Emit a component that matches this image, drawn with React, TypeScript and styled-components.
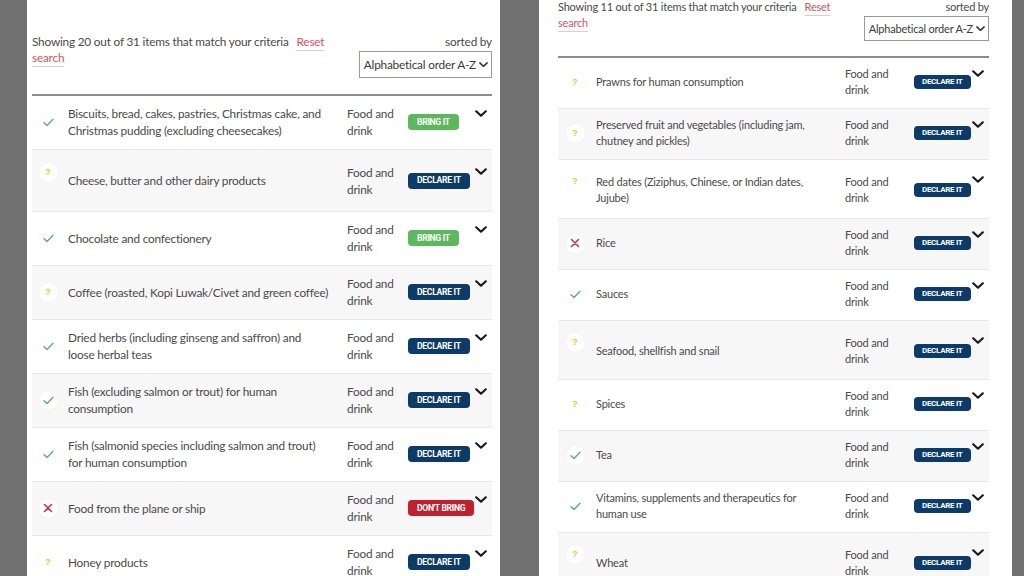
import styled, { createGlobalStyle } from 'styled-components'

type Status = 'check' | 'question' | 'cross'
type Action = 'bring' | 'declare' | 'dont'

type Item = {
  status: Status
  name: string
  action: Action
  tall?: boolean
}

const leftItems: Item[] = [
  { status: 'check', name: 'Biscuits, bread, cakes, pastries, Christmas cake, and\nChristmas pudding (excluding cheesecakes)', action: 'bring' },
  { status: 'question', name: 'Cheese, butter and other dairy products', action: 'declare', tall: true },
  { status: 'check', name: 'Chocolate and confectionery', action: 'bring' },
  { status: 'question', name: 'Coffee (roasted, Kopi Luwak/Civet and green coffee)', action: 'declare' },
  { status: 'check', name: 'Dried herbs (including ginseng and saffron) and\nloose herbal teas', action: 'declare' },
  { status: 'check', name: 'Fish (excluding salmon or trout) for human\nconsumption', action: 'declare' },
  { status: 'check', name: 'Fish (salmonid species including salmon and trout)\nfor human consumption', action: 'declare' },
  { status: 'cross', name: 'Food from the plane or ship', action: 'dont' },
  { status: 'question', name: 'Honey products', action: 'declare' },
]

const rightItems: Item[] = [
  { status: 'question', name: 'Prawns for human consumption', action: 'declare' },
  { status: 'question', name: 'Preserved fruit and vegetables (including jam,\nchutney and pickles)', action: 'declare' },
  { status: 'question', name: 'Red dates (Ziziphus, Chinese, or Indian dates,\nJujube)', action: 'declare', tall: true },
  { status: 'cross', name: 'Rice', action: 'declare' },
  { status: 'check', name: 'Sauces', action: 'declare' },
  { status: 'question', name: 'Seafood, shellfish and snail', action: 'declare', tall: true },
  { status: 'question', name: 'Spices', action: 'declare' },
  { status: 'check', name: 'Tea', action: 'declare' },
  { status: 'check', name: 'Vitamins, supplements and therapeutics for\nhuman use', action: 'declare' },
  { status: 'question', name: 'Wheat', action: 'declare', tall: true },
]

const actionLabel: Record<Action, string> = {
  bring: 'BRING IT',
  declare: 'DECLARE IT',
  dont: "DON'T BRING",
}

const actionColor: Record<Action, string> = {
  bring: '#5cb85c',
  declare: '#0c3b69',
  dont: '#c1202d',
}

const GlobalStyle = createGlobalStyle`
  html, body {
    margin: 0;
    padding: 0;
    background: #717171;
    font-family: Lato, "Liberation Sans", sans-serif;
  }
`

const Page = styled.div`
  display: flex;
  gap: 39px;
  height: 576px;
  padding-left: 27px;
  overflow: hidden;
`

type PanelProps = { $compact?: boolean }

const Panel = styled.section<PanelProps>`
  --fs: ${(p) => (p.$compact ? '11px' : '11.8px')};
  --lh: ${(p) => (p.$compact ? '16px' : '17px')};
  --cols: ${(p) => (p.$compact ? '38px 249px 69px 58px 16px' : '36px 279px 61px 67px 17px')};
  --badge-h: ${(p) => (p.$compact ? '14px' : '16px')};
  --badge-fs: ${(p) => (p.$compact ? '8px' : '8.6px')};
  --badge-pad: ${(p) => (p.$compact ? '8px' : '9px')};
  --pad-top: ${(p) => (p.$compact ? '8px' : '9px')};
  --pad-bottom: 10px;
  --tall-top: ${(p) => (p.$compact ? '12px' : '13px')};
  --tall-bottom: ${(p) => (p.$compact ? '11px' : '13px')};
  width: 473px;
  height: 576px;
  box-sizing: border-box;
  background: #ffffff;
  padding: ${(p) => (p.$compact ? '0 23px 0 19px' : '34px 8px 0 5px')};
  color: #4a4a4a;
  font-size: var(--fs);
  line-height: var(--lh);
  letter-spacing: -0.2px;
`

const Header = styled.div<PanelProps>`
  display: flex;
  justify-content: space-between;
  align-items: flex-start;
  padding-bottom: ${(p) => (p.$compact ? '15px' : '16px')};
  border-bottom: 2px solid #8c8c8c;
  margin-top: ${(p) => (p.$compact ? '-1px' : '0')};
`

const Summary = styled.p<PanelProps>`
  margin: 0;
  width: ${(p) => (p.$compact ? '290px' : '310px')};
  line-height: 16px;
`

const ResetLink = styled.a`
  color: #d3545f;
  margin-left: 8px;
  text-decoration: underline;
  text-decoration-color: #f1c4c8;
  text-underline-offset: 4px;
  white-space: pre-line;
`

const SortBox = styled.div`
  display: flex;
  flex-direction: column;
  align-items: flex-end;
  gap: 1px;
  line-height: 16px;
`

const Select = styled.div<PanelProps>`
  display: flex;
  align-items: center;
  gap: 3px;
  height: ${(p) => (p.$compact ? '25px' : '27px')};
  box-sizing: border-box;
  padding: 0 3px 0 4px;
  border: 1px solid #9a9a9a;
  color: #3a3a3a;
`

const List = styled.div``

const Row = styled.div<{ $tall?: boolean }>`
  display: grid;
  grid-template-columns: var(--cols);
  align-items: center;
  padding: ${(p) =>
    p.$tall ? 'var(--tall-top) 0 var(--tall-bottom)' : 'var(--pad-top) 0 var(--pad-bottom)'};
  border-bottom: 1px solid #e8e8e8;
  background: #ffffff;

  &:nth-child(even) {
    background: #f7f7f7;
  }
`

const IconCell = styled.div<{ $lift?: boolean }>`
  display: flex;
  justify-content: center;
  padding-right: 4px;
  margin-bottom: ${(p) => (p.$lift ? '16px' : '0')};
`

const IconDisc = styled.span`
  display: flex;
  align-items: center;
  justify-content: center;
  width: 19px;
  height: 19px;
  border-radius: 50%;
  background: #ffffff;
  box-shadow: 0 0 2px rgba(0, 0, 0, 0.05);
`

const Question = styled.span`
  color: #f2c61f;
  font-family: "Liberation Sans", sans-serif;
  font-weight: 700;
  font-size: 9px;
  line-height: 1;
`

const Name = styled.div`
  white-space: pre;
  padding-right: 10px;
`

const Category = styled.div`
  white-space: pre;
`

const BadgeCell = styled.div`
  display: flex;
`

const Badge = styled.span<{ $action: Action }>`
  display: inline-flex;
  align-items: center;
  height: var(--badge-h);
  padding: 0 var(--badge-pad);
  border-radius: 4px;
  background: ${(p) => actionColor[p.$action]};
  color: #ffffff;
  font-family: Roboto, "Liberation Sans", sans-serif;
  font-weight: 700;
  font-size: var(--badge-fs);
  letter-spacing: -0.3px;
  white-space: nowrap;
`

const Toggle = styled.div`
  align-self: start;
  display: flex;
  align-items: center;
  height: var(--lh);
  color: #1b1b1b;
`

const Chevron = ({ size = 12 }: { size?: number }) => (
  <svg width={size} height={size * 0.6} viewBox="0 0 12 7" fill="none">
    <path d="M1.2 1.2 6 5.6l4.8-4.4" stroke="currentColor" strokeWidth="2.2" strokeLinecap="round" strokeLinejoin="round" />
  </svg>
)

const StatusIcon = ({ status }: { status: Status }) => {
  if (status === 'question') return <Question>?</Question>
  if (status === 'check')
    return (
      <svg width="11" height="9" viewBox="0 0 11 9" fill="none">
        <path d="M1 4.8 4 7.6 10 1.2" stroke="#5aae80" strokeWidth="1.4" strokeLinecap="round" strokeLinejoin="round" />
      </svg>
    )
  return (
    <svg width="10" height="10" viewBox="0 0 10 10" fill="none">
      <path d="M1.5 1.5l7 7M8.5 1.5l-7 7" stroke="#c8384d" strokeWidth="1.6" strokeLinecap="round" />
    </svg>
  )
}

const ItemRow = ({ item }: { item: Item }) => (
  <Row $tall={item.tall}>
    <IconCell $lift={item.tall}>
      <IconDisc>
        <StatusIcon status={item.status} />
      </IconDisc>
    </IconCell>
    <Name>{item.name}</Name>
    <Category>{'Food and\ndrink'}</Category>
    <BadgeCell>
      <Badge $action={item.action}>{actionLabel[item.action]}</Badge>
    </BadgeCell>
    <Toggle>
      <Chevron />
    </Toggle>
  </Row>
)

const ResultsPanel = ({ shown, items, compact }: { shown: number; items: Item[]; compact?: boolean }) => (
  <Panel $compact={compact}>
    <Header $compact={compact}>
      <Summary $compact={compact}>
        Showing {shown} out of 31 items that match your criteria
        <ResetLink>{'Reset\nsearch'}</ResetLink>
      </Summary>
      <SortBox>
        <span>sorted by</span>
        <Select $compact={compact}>
          Alphabetical order A-Z
          <Chevron size={9} />
        </Select>
      </SortBox>
    </Header>
    <List>
      {items.map((item) => (
        <ItemRow key={item.name} item={item} />
      ))}
    </List>
  </Panel>
)

export default function App() {
  return (
    <>
      <GlobalStyle />
      <Page>
        <ResultsPanel shown={20} items={leftItems} />
        <ResultsPanel shown={11} items={rightItems} compact />
      </Page>
    </>
  )
}
